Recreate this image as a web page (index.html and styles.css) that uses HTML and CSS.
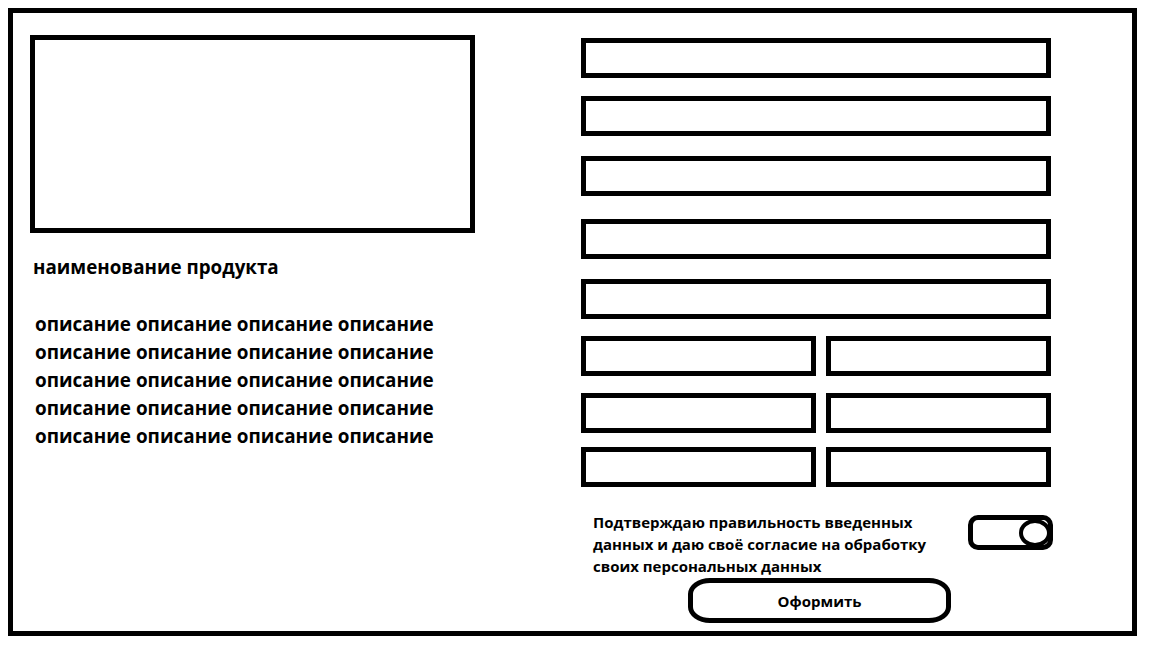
FILE: index.html
```html
<!DOCTYPE html>
<html lang="ru">
  <head>
    <meta charset="UTF-8" />
    <meta name="viewport" content="width=device-width, initial-scale=1.0" />
    <title>Оформление заказа</title>
    <link rel="stylesheet" href="styles.css">
  </head>
  <body>
    <div class="frame">
      <div class="product">
        <div class="photo"></div>
        <h2 class="product-name">наименование продукта</h2>
        <p class="description">
          описание описание описание описание<br>
          описание описание описание описание<br>
          описание описание описание описание<br>
          описание описание описание описание<br>
          описание описание описание описание
        </p>
      </div>

      <form class="order">
        <div class="field"></div>
        <div class="field"></div>
        <div class="field"></div>
        <div class="field"></div>
        <div class="field"></div>
        <div class="pair">
          <div class="field wide"></div>
          <div class="field"></div>
        </div>
        <div class="pair">
          <div class="field wide"></div>
          <div class="field"></div>
        </div>
        <div class="pair pair-last">
          <div class="field wide"></div>
          <div class="field"></div>
        </div>

        <div class="consent">
          <p class="consent-text">Подтверждаю правильность введенных данных и даю своё согласие на обработку своих персональных данных</p>
          <span class="toggle"><span class="knob"></span></span>
        </div>
        <button type="button" class="submit">Оформить</button>
      </form>
    </div>
  </body>
</html>
```

FILE: styles.css
```css
body {
    margin: 8px;
    font-family: "Open Sans", Arial, sans-serif;
    color: #000000;
    background: #ffffff;
}

.frame {
    width: 1129px;
    height: 628px;
    box-sizing: border-box;
    border: 5px solid #000000;
    padding: 22px 0 0 17px;
    display: flex;
}

.product {
    width: 445px;
}

.photo {
    height: 198px;
    box-sizing: border-box;
    border: 5px solid #000000;
}

.product-name {
    margin: 20px 0 0 3px;
    font-size: 18.8px;
    line-height: 28px;
    font-weight: 700;
}

.description {
    margin: 29px 0 0 5px;
    font-size: 18.9px;
    line-height: 28px;
    font-weight: 700;
}

.order {
    width: 470px;
    margin: 3px 0 0 106px;
    display: flex;
    flex-direction: column;
}

.field {
    height: 40px;
    box-sizing: border-box;
    border: 5px solid #000000;
}

.order > .field + .field {
    margin-top: 18px;
}

.order > .field:nth-child(3) {
    margin-top: 20px;
}

.order > .field:nth-child(4) {
    margin-top: 23px;
}

.order > .field:nth-child(5) {
    margin-top: 20px;
}

.pair {
    display: flex;
    gap: 10px;
    margin-top: 17px;
}

.pair-last {
    margin-top: 14px;
}

.pair .field {
    flex: 1;
}

.pair .field.wide {
    flex: 0 0 235px;
}

.consent {
    display: flex;
    align-items: flex-start;
    margin-top: 24px;
}

.consent-text {
    width: 340px;
    margin: 0 0 0 12px;
    font-size: 15px;
    line-height: 22px;
    font-weight: 700;
}

.toggle {
    position: relative;
    flex-shrink: 0;
    width: 85px;
    height: 35px;
    box-sizing: border-box;
    margin: 4px -2px 0 35px;
    border: 5px solid #000000;
    border-radius: 10px;
}

.knob {
    position: absolute;
    right: -3px;
    top: -1px;
    width: 32px;
    height: 28px;
    box-sizing: border-box;
    border: 4px solid #000000;
    border-radius: 50%;
    background: #ffffff;
}

.submit {
    align-self: flex-start;
    width: 263px;
    height: 45px;
    margin: 1px 0 0 107px;
    border: 5px solid #000000;
    border-radius: 22px / 16px;
    background: #ffffff;
    font-family: "Open Sans", Arial, sans-serif;
    font-size: 15px;
    font-weight: 700;
    color: #000000;
}
```
